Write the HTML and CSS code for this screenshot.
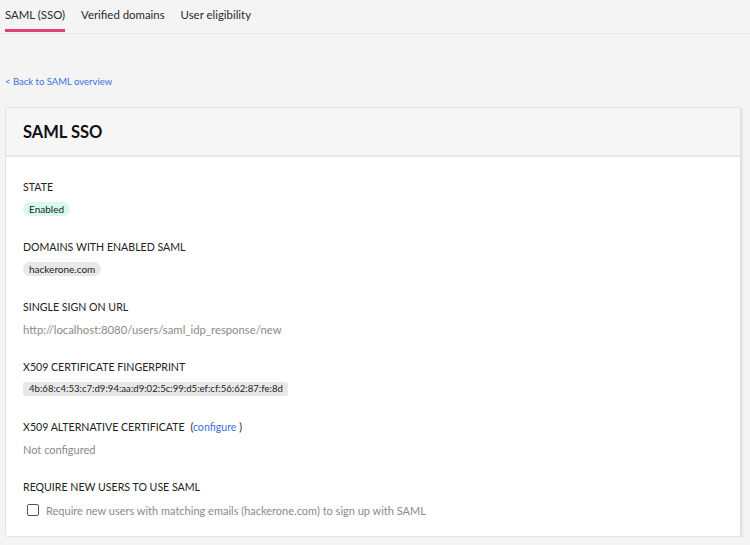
FILE: index.html
```html
<!DOCTYPE html>
<html>
<head>
<meta charset="utf-8">
<link rel="stylesheet" href="styles.css">
</head>
<body>
<nav class="tabs">
  <div class="tab active">SAML (SSO)</div>
  <div class="tab">Verified domains</div>
  <div class="tab">User eligibility</div>
</nav>
<div class="back"><a href="#">&lt; Back to SAML overview</a></div>
<section class="card">
  <header class="card-head"><h1>SAML SSO</h1></header>
  <div class="card-body">
    <div class="field">
      <div class="label">STATE</div>
      <div class="value"><span class="pill pill-green">Enabled</span></div>
    </div>
    <div class="field">
      <div class="label">DOMAINS WITH ENABLED SAML</div>
      <div class="value"><span class="pill">hackerone.com</span></div>
    </div>
    <div class="field">
      <div class="label">SINGLE SIGN ON URL</div>
      <div class="value muted url">http://localhost:8080/users/saml_idp_response/new</div>
    </div>
    <div class="field">
      <div class="label">X509 CERTIFICATE FINGERPRINT</div>
      <div class="value"><span class="pill pill-code">4b:68:c4:53:c7:d9:94:aa:d9:02:5c:99:d5:ef:cf:56:62:87:fe:8d</span></div>
    </div>
    <div class="field">
      <div class="label">X509 ALTERNATIVE CERTIFICATE <span class="paren">(<a href="#">configure</a> )</span></div>
      <div class="value muted">Not configured</div>
    </div>
    <div class="field last">
      <div class="label">REQUIRE NEW USERS TO USE SAML</div>
      <label class="value check muted"><span class="box"></span>Require new users with matching emails (hackerone.com) to sign up with SAML</label>
    </div>
  </div>
</section>
</body>
</html>
```
FILE: styles.css
```css
html, body {
  margin: 0;
  padding: 0;
  background: #f4f4f4;
  font-family: Lato, "Open Sans", sans-serif;
  color: #222;
}
.tabs {
  display: flex;
  gap: 16px;
  padding-left: 5px;
  border-bottom: 1px solid #e8e8e8;
  height: 33px;
}
.tab {
  font-size: 11.4px;
  line-height: 29px;
  color: #2a2a2a;
  border-bottom: 3px solid transparent;
  height: 29px;
}
.tab.active {
  border-bottom-color: #e0407a;
}
.back {
  margin-top: 41px;
  padding-left: 5px;
  font-size: 9.5px;
  line-height: 14px;
}
a {
  color: #3b6fe0;
  text-decoration: none;
}
.card {
  margin: 18px 9px 0 5px;
  background: #fff;
  border: 1px solid #e4e4e4;
  border-radius: 2px;
  box-shadow: 1px 1px 2px rgba(0,0,0,0.12);
}
.card-head {
  background: #f5f6f5;
  height: 47px;
  display: flex;
  align-items: center;
  padding-left: 17px;
  border-bottom: 2px solid #e6e6e6;
}
.card-head h1 {
  margin: 0;
  font-size: 16.5px;
  font-weight: 700;
  color: #111;
}
.card-body {
  padding: 22px 17px 18px;
}
.field {
  margin-bottom: 22px;
}
.field.last {
  margin-bottom: 0;
}
.label {
  font-size: 10.6px;
  line-height: 16px;
  color: #222;
}
.paren {
  margin-left: 3px;
}
.value {
  margin-top: 6px;
  height: 16px;
  display: flex;
  align-items: center;
  font-size: 11px;
}
.url {
  font-size: 11.3px;
}
.muted {
  color: #8a8a8a;
}
.pill {
  display: inline-block;
  font-size: 10px;
  line-height: 14px;
  padding: 0 6px;
  border-radius: 7px;
  background: #e8e8e8;
  color: #222;
}
.pill-green {
  background: #d4faf1;
}
.pill-code {
  font-size: 9.6px;
  border-radius: 3px;
  padding: 0 5px 0 6px;
}
.check {
  margin-top: 7px;
  padding-left: 4px;
  gap: 7px;
}
.box {
  width: 10px;
  height: 10px;
  border: 1px solid #555;
  border-radius: 2px;
  flex: none;
}
```
